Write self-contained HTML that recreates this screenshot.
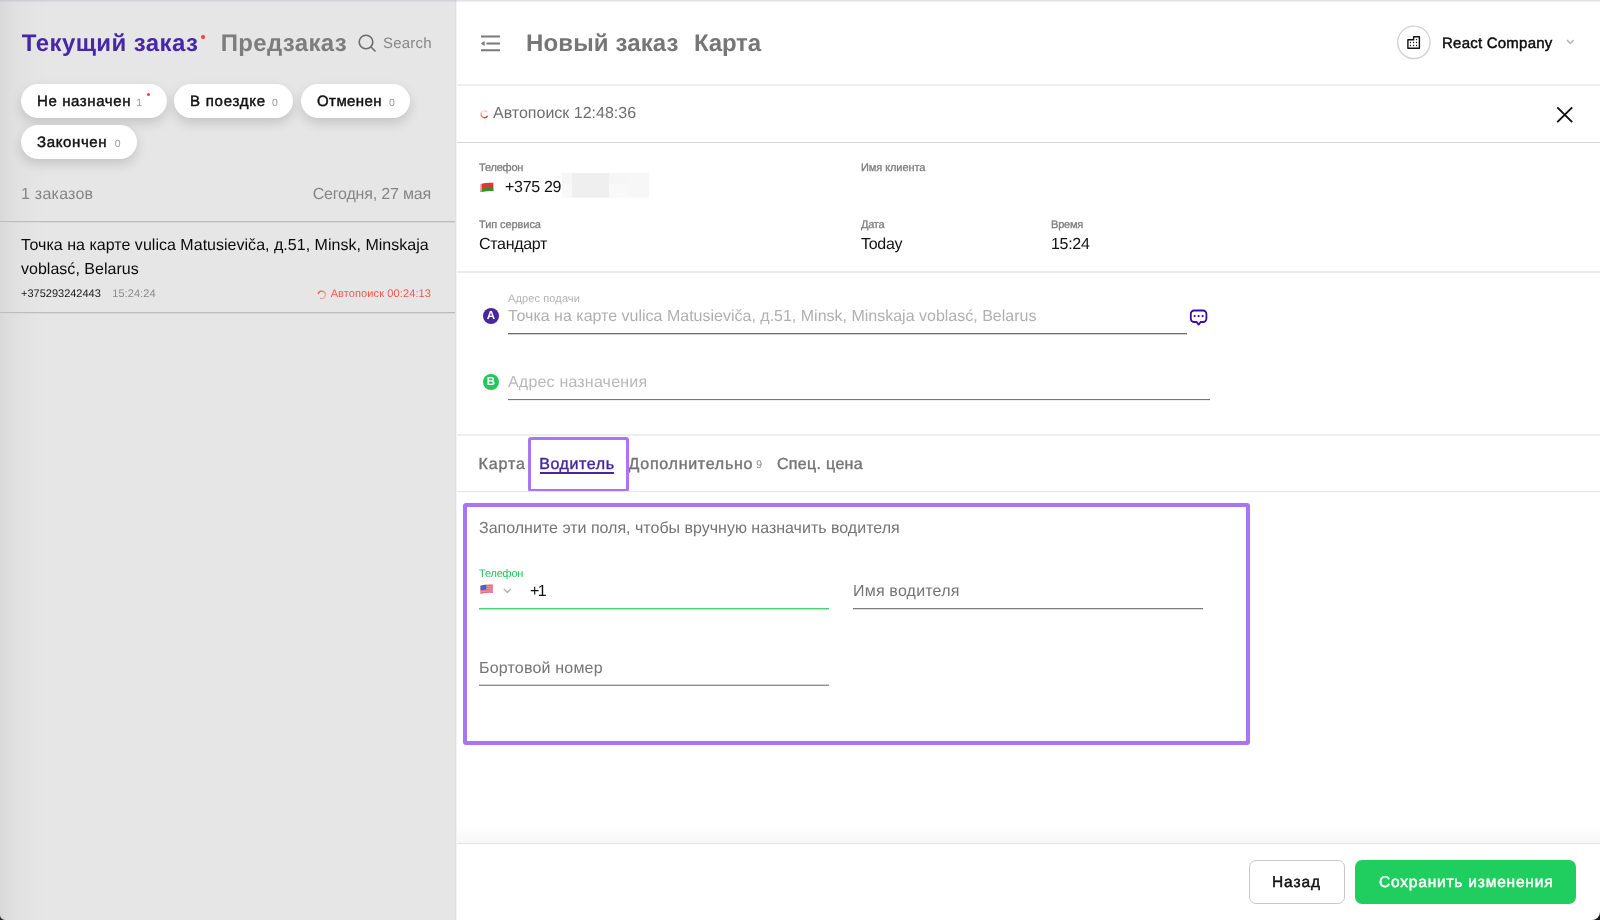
<!DOCTYPE html>
<html><head><meta charset="utf-8">
<style>
*{box-sizing:border-box;margin:0;padding:0}
html,body{width:1600px;height:920px;overflow:hidden;background:#fff;font-family:"Liberation Sans",sans-serif;color:#111;text-rendering:geometricPrecision}
.abs{position:absolute;white-space:nowrap}
#left{position:absolute;left:0;top:0;width:455px;height:920px;background:linear-gradient(90deg,#d8d8d8 0,#dddddd 7px,#e0e0e0 14px,#e2e2e2 22px,#e4e4e4 32px,#e6e6e6 46px,#e6e6e6 100%)}
#right{position:absolute;left:456px;top:0;width:1144px;height:920px;background:#fff}
#sep{position:absolute;left:455px;top:0;width:2px;height:920px;background:linear-gradient(90deg,#e1e1e1 0,#e1e1e1 50%,#f3f3f3 50%,#f3f3f3 100%);z-index:2}
#topline{position:absolute;left:0;top:0;width:1600px;height:2px;background:linear-gradient(180deg,rgba(170,170,185,.42),rgba(170,170,185,.12));z-index:5}
.pill{position:absolute;height:34px;border-radius:17px;background:#fff;box-shadow:0 5px 12px rgba(0,0,0,.15)}
.pill span.c{top:13px;font-size:10.5px;color:#9a9a9a;line-height:12px}
.pill span{position:absolute;white-space:nowrap}
.hl{position:absolute;height:1px;background:#d9d9d9}

.lbl{font-size:11px;color:#7d7d7d;line-height:13px;font-weight:700}
.val{font-size:16px;color:#111;line-height:20px}
.tab{font-size:16px;color:#757575;line-height:20px;font-weight:700}
.circ{width:16px;height:16px;border-radius:8px;color:#fff;font-size:11.5px;font-weight:700;text-align:center;line-height:17.4px}

/* tuning */
#t1{font-size:24px !important;letter-spacing:.42px}#t2{font-size:24px !important;letter-spacing:.31px}#h1{font-size:24px !important;letter-spacing:.13px}#h2{font-size:24px !important;letter-spacing:-.17px}
#t3{letter-spacing:.2px}
#p1,#p2,#p3,#p4{font-size:15px !important;letter-spacing:.02px;margin-top:1px}#p1{letter-spacing:.1px}
#t4,#t5{font-size:16px !important;letter-spacing:.24px}#t5{letter-spacing:-.18px}
#t6{font-size:16px !important;letter-spacing:.02px}
#t7,#t8,#t9{font-size:11px !important}
#t8{letter-spacing:.08px}
#t9{letter-spacing:.11px}
#h3{font-size:15px !important}
#p1,#p2,#p3,#p4,#h3,#g1,#g2{font-weight:400 !important;-webkit-text-stroke:.45px currentColor}
#p1{letter-spacing:.6px !important}#p2{letter-spacing:.76px !important}#p3{letter-spacing:.42px !important}#p4{letter-spacing:.63px !important}#h3{letter-spacing:.23px}#g1{letter-spacing:.9px !important}#g2{letter-spacing:.8px !important}
#a1{font-size:16px !important}
.lbl{font-weight:400;-webkit-text-stroke:.3px #7d7d7d;letter-spacing:-.2px}
.val{letter-spacing:-.3px}#i6{letter-spacing:-.25px}#i3,#i4{letter-spacing:-.08px}#b1{letter-spacing:.85px}#b2{letter-spacing:.6px}#b3{letter-spacing:.72px}#b5{letter-spacing:.32px}#f2{letter-spacing:-.2px}#d1{letter-spacing:.12px}
.tab{font-weight:400;-webkit-text-stroke:.4px currentColor}
#f1{font-size:16px !important}
#f3{letter-spacing:-1.5px}
#d3,#f4,#f5{letter-spacing:.19px}
#g1,#g2{font-size:15.5px !important;letter-spacing:.2px}#g1{letter-spacing:.3px}
</style></head><body><div id="wrap" style="position:absolute;left:0;top:0;width:1600px;height:920px;will-change:transform">
<div id="left"></div><div id="sep"></div><div id="right"></div><div id="topline"></div>

<!-- LEFT PANEL -->
<div class="abs" id="t1" style="left:21.8px;top:30.0px;font-size:22.5px;font-weight:700;color:#4527a8;line-height:28px">Текущий заказ</div>
<div class="abs" style="left:201px;top:35px;width:4px;height:4px;border-radius:2px;background:#ff3b30"></div>
<div class="abs" id="t2" style="left:220.8px;top:30.0px;font-size:22.5px;font-weight:700;color:#7d7d7d;line-height:28px">Предзаказ</div>
<svg class="abs" style="left:357px;top:33px" width="20" height="20" viewBox="0 0 20 20"><circle cx="9" cy="9" r="6.8" fill="none" stroke="#6b6b6b" stroke-width="1.6"/><path d="M14 14 L18 18" stroke="#6b6b6b" stroke-width="1.6" stroke-linecap="round"/></svg>
<div class="abs" id="t3" style="left:383px;top:35.0px;font-size:15px;color:#868686;line-height:18px">Search</div>

<div class="pill" style="left:21px;top:84px;width:146px"><span id="p1" style="left:16px;top:8px;font-size:14.5px;font-weight:700;line-height:17px">Не назначен</span><span class="c" id="c1" style="left:115.3px">1</span><i style="position:absolute;left:126px;top:8.7px;width:3.4px;height:3.4px;border-radius:2px;background:#ff3b30"></i></div>
<div class="pill" style="left:174px;top:84px;width:119px"><span id="p2" style="left:16px;top:8px;font-size:14.5px;font-weight:700;line-height:17px">В поездке</span><span class="c" id="c2" style="left:98px">0</span></div>
<div class="pill" style="left:301px;top:84px;width:109px"><span id="p3" style="left:16px;top:8px;font-size:14.5px;font-weight:700;line-height:17px">Отменен</span><span class="c" id="c3" style="left:88px">0</span></div>
<div class="pill" style="left:21px;top:125px;width:116px;height:33.5px"><span id="p4" style="left:16px;top:8px;font-size:14.5px;font-weight:700;line-height:17px">Закончен</span><span class="c" id="c4" style="left:93.8px">0</span></div>

<div class="abs" id="t4" style="left:21px;top:186.0px;font-size:15px;color:#858585;line-height:18px">1 заказов</div>
<div class="abs" id="t5" style="right:1169px;top:186.0px;font-size:15px;color:#858585;line-height:18px">Сегодня, 27 мая</div>
<div class="hl" style="left:0;top:221px;width:455px;height:2px;background:linear-gradient(#bdbdbd 50%,#dadada 50%)"></div>
<div class="abs" id="t6" style="left:21px;top:234.0px;font-size:15px;color:#0a0a0a;line-height:24px">Точка на карте vulica Matusieviča, д.51, Minsk, Minskaja<br>voblasć, Belarus</div>
<div class="abs" id="t7" style="left:21px;top:288.0px;font-size:10.5px;color:#1a1a1a;line-height:13px">+375293242443</div>
<div class="abs" id="t8" style="left:112.2px;top:288.0px;font-size:10.5px;color:#8a8a8a;line-height:13px">15:24:24</div>
<div class="abs" id="t9" style="right:1169px;top:288.0px;font-size:10.5px;color:#f5564a;line-height:13px">Автопоиск 00:24:13</div>
<div class="hl" style="left:0;top:312px;width:455px;height:2px;background:linear-gradient(#bdbdbd 50%,#dadada 50%)"></div>

<!-- RIGHT HEADER -->
<div class="abs" id="h1" style="left:526px;top:30.0px;font-size:22.5px;font-weight:700;color:#767676;line-height:28px">Новый заказ</div>
<div class="abs" id="h2" style="left:694px;top:30.0px;font-size:22.5px;font-weight:700;color:#767676;line-height:28px">Карта</div>
<div class="abs" id="h3" style="left:1442px;top:35.0px;font-size:15px;font-weight:700;color:#0c0c0c;line-height:18px">React Company</div>
<div class="hl" style="left:456px;top:84px;width:1144px;height:2px;background:#efefef"></div>
<div class="abs" id="a1" style="left:493px;top:105.0px;font-size:15px;color:#6f6f6f;line-height:18px">Автопоиск 12:48:36</div>
<div class="hl" style="left:456px;top:142px;width:1144px;background:#d6d6d6"></div>


<!-- INFO -->
<div class="abs lbl" id="i1" style="left:479px;top:162.0px">Телефон</div>
<div class="abs val" id="i2" style="left:505px;top:178.0px">+375 29</div>
<div class="abs lbl" id="i3" style="left:861px;top:162.0px">Имя клиента</div>
<div class="abs lbl" id="i4" style="left:479px;top:219.0px">Тип сервиса</div>
<div class="abs val" id="i5" style="left:479px;top:235.0px">Стандарт</div>
<div class="abs lbl" id="i6" style="left:861px;top:219.0px">Дата</div>
<div class="abs val" id="i7" style="left:861px;top:235.0px">Today</div>
<div class="abs lbl" id="i8" style="left:1051px;top:219.0px">Время</div>
<div class="abs val" id="i9" style="left:1051px;top:235.0px">15:24</div>
<div class="hl" style="left:456px;top:271px;width:1144px;height:2px;background:#ececec"></div>

<!-- ADDRESSES -->
<div class="abs" id="d1" style="left:508px;top:293.0px;font-size:11px;color:#b3b3b3;line-height:13px">Адрес подачи</div>
<div class="abs circ" style="left:483px;top:308px;background:#4527a0">A</div>
<div class="abs" id="d2" style="left:508px;top:307.0px;font-size:16px;color:#b0b0b0;line-height:20px">Точка на карте vulica Matusieviča, д.51, Minsk, Minskaja voblasć, Belarus</div>
<div class="hl" style="left:508px;top:333px;width:678.6px;height:2px;background:linear-gradient(#6b6b6b 50%,#d4d4d4 50%)"></div>
<div class="abs circ" style="left:483px;top:374px;background:#22c75e">B</div>
<div class="abs" id="d3" style="left:508px;top:373.0px;font-size:16px;color:#b8b8b8;line-height:20px">Адрес назначения</div>
<div class="hl" style="left:508px;top:399px;width:702.4px;height:2px;background:linear-gradient(#777 50%,#eee 50%)"></div>
<div class="hl" style="left:456px;top:434px;width:1144px;height:2px;background:#eeeeee"></div>

<!-- TABS -->
<div class="abs tab" id="b1" style="left:478.6px;top:455.0px">Карта</div>
<div class="abs tab" id="b2" style="left:539.2px;top:455.0px;color:#4527a0">Водитель</div>
<div class="abs" style="left:540px;top:471.5px;width:74px;height:2.5px;background:#4527a0"></div>
<div class="abs tab" id="b3" style="left:628.6px;top:455.0px">Дополнительно</div>
<div class="abs" id="b4" style="left:756px;top:459.0px;font-size:11px;color:#8a8a8a;line-height:12px">9</div>
<div class="abs tab" id="b5" style="left:777px;top:455.0px">Спец. цена</div>
<div class="abs" style="left:528px;top:437px;width:101px;height:55px;border:3px solid #a974f5;border-radius:3px"></div>
<div class="hl" style="left:456px;top:491px;width:1144px;height:1px;background:#e6e6e6"></div>

<!-- DRIVER FORM -->
<div class="abs" style="left:463px;top:503px;width:787px;height:242px;border:4px solid #a974f5;border-radius:3px"></div>
<div class="abs" id="f1" style="left:479px;top:520.0px;font-size:15px;color:#757575;line-height:18px">Заполните эти поля, чтобы вручную назначить водителя</div>
<div class="abs" id="f2" style="left:479px;top:568.0px;font-size:11px;color:#22c55e;line-height:13px">Телефон</div>
<div class="abs val" id="f3" style="left:530px;top:582.0px">+1</div>
<div class="hl" style="left:479px;top:608px;width:350px;height:2px;background:linear-gradient(#48d275 50%,#a8eabd 50%)"></div>
<div class="abs" id="f4" style="left:853px;top:582.0px;font-size:16px;color:#757575;line-height:20px">Имя водителя</div>
<div class="hl" style="left:853px;top:608px;width:349.6px;height:2px;background:linear-gradient(#7d7d7d 50%,#dcdcdc 50%)"></div>
<div class="abs" id="f5" style="left:479px;top:659.0px;font-size:16px;color:#757575;line-height:20px">Бортовой номер</div>
<div class="hl" style="left:479px;top:684px;width:350px;height:2px;background:linear-gradient(#d0d0d0 50%,#8f8f8f 50%)"></div>

<!-- FOOTER -->
<div class="abs" style="left:456px;top:826px;width:1144px;height:17px;background:linear-gradient(180deg,rgba(0,0,0,0) 0,rgba(0,0,0,.035) 100%)"></div>
<div class="hl" style="left:456px;top:843px;width:1144px;height:1px;background:#e3e3e3"></div>
<div class="abs" style="left:1249px;top:860px;width:96px;height:44px;border:1px solid #c8c8c8;border-radius:7px;background:#fff"></div>
<div class="abs" id="g1" style="left:1272px;top:874.0px;font-size:15px;font-weight:700;color:#111;line-height:18px">Назад</div>
<div class="abs" style="left:1355px;top:860px;width:221px;height:44px;border-radius:7px;background:#20ce60"></div>
<div class="abs" id="g2" style="left:1379px;top:874.0px;font-size:15px;font-weight:700;color:#fff;line-height:18px">Сохранить изменения</div>


<!-- ICONS -->
<svg class="abs" style="left:0;top:0;pointer-events:none" width="1600" height="920" viewBox="0 0 1600 920">
<defs>
<linearGradient id="sg1" x1=".7" y1="1" x2=".4" y2="0"><stop offset="0" stop-color="#ff3b30" stop-opacity="1"/><stop offset="1" stop-color="#ff3b30" stop-opacity=".15"/></linearGradient>
<linearGradient id="sg2" x1="0" y1="0" x2="1" y2="1"><stop offset="0" stop-color="#ff4335" stop-opacity="1"/><stop offset="1" stop-color="#ff4335" stop-opacity=".2"/></linearGradient>
</defs>
<!-- menu icon -->
<g stroke="#7a7a7a" stroke-width="1.9" fill="none"><path d="M481 36.5H500M486.5 43.5H500M481 50.3H500"/></g>
<path d="M480.8 43.5L484.6 41V46Z" fill="#7a7a7a"/>
<!-- company circle -->
<circle cx="1413.9" cy="43" r="16.8" fill="#000" opacity=".05"/>
<circle cx="1413.9" cy="42.3" r="16.2" fill="#fff" stroke="#d2d2d2" stroke-width="1.3"/>
<path d="M1407.9 39.8H1413.6V36.8H1419.4V48.3H1407.9Z" fill="none" stroke="#111" stroke-width="1.4" stroke-linejoin="round"/>
<g fill="#111"><circle cx="1416.5" cy="39.6" r=".65"/><circle cx="1410.5" cy="42.5" r=".65"/><circle cx="1413.5" cy="42.5" r=".65"/><circle cx="1416.5" cy="42.5" r=".65"/><circle cx="1410.5" cy="45.5" r=".65"/><circle cx="1413.5" cy="45.5" r=".65"/><circle cx="1416.5" cy="45.5" r=".65"/></g>
<path d="M1567 40L1570.3 43.4L1573.6 40" fill="none" stroke="#b4b4b4" stroke-width="1.5"/>
<!-- close X -->
<path d="M1557.3 107.3L1572.2 122.2M1572.2 107.3L1557.3 122.2" stroke="#111" stroke-width="1.9" fill="none"/>
<!-- spinner top -->
<path d="M487.3 116.2A3.5 3.5 0 1 1 486.6 111.4" fill="none" stroke="url(#sg1)" stroke-width="1.5" stroke-linecap="round"/>
<!-- spinner list -->
<path d="M318.3 293.6A3.7 3.7 0 1 1 320.6 298.4" fill="none" stroke="url(#sg2)" stroke-width="1.5" stroke-linecap="round"/>
<!-- BY flag -->
<path d="M480.6 184Q487 182.2 493.3 182.8V191.1Q487 190.4 480.6 192Z" fill="#d63a3a"/>
<path d="M480.6 189.3Q487 187.7 493.3 188.3V191.1Q487 190.4 480.6 192Z" fill="#1ea01e"/>
<path d="M480.6 184L481.6 183.8V191.8L480.6 192Z" fill="#f3c9c9"/>
<!-- blurred phone -->
<rect x="562" y="173" width="87" height="24.5" fill="#f6f6f6"/>
<rect x="572" y="173" width="37" height="24.5" fill="#efefef"/>
<rect x="562" y="184" width="10" height="13.5" fill="#f9f9f9"/>
<rect x="609" y="184" width="19" height="13.5" fill="#f9f9f9"/>
<rect x="628" y="173" width="21" height="24.5" fill="#f7f7f7"/>
<!-- message icon -->
<path d="M1194.2 310.5H1203A3.4 3.4 0 0 1 1206.4 313.9V318.6A3.4 3.4 0 0 1 1203 322H1200.6L1198.6 324.6L1196.6 322H1194.2A3.4 3.4 0 0 1 1190.8 318.6V313.9A3.4 3.4 0 0 1 1194.2 310.5Z" fill="none" stroke="#3a0ca3" stroke-width="1.8" stroke-linejoin="round"/>
<g fill="#3a0ca3"><circle cx="1194.7" cy="316.1" r="1.1"/><circle cx="1198.6" cy="316.1" r="1.1"/><circle cx="1202.6" cy="316.1" r="1.1"/></g>
<!-- US flag -->
<path d="M480.4 585.8Q486.5 584 492.9 584.6V593Q486.5 592.4 480.4 593.9Z" fill="#e8667a"/>
<path d="M480.4 587.6Q486.5 585.8 492.9 586.4M480.4 589.9Q486.5 588.1 492.9 588.7M480.4 592.1Q486.5 590.4 492.9 591" stroke="#f3b3bc" stroke-width=".7" fill="none"/>
<path d="M480.6 585.8Q483.5 584.9 486.3 584.7V589.4Q483.5 589.6 480.6 590.3Z" fill="#2f6fbd"/>
<path d="M503.8 589L507.3 592.4L510.8 589" fill="none" stroke="#b4b4b4" stroke-width="1.5"/>
<!-- bottom corners -->
<path d="M1600 912A8 8 0 0 1 1592 920H1600Z" fill="#15151f"/>
<path d="M0 915A5 5 0 0 0 5 920H0Z" fill="#2a2a30"/>
</svg>

</div></body></html>
